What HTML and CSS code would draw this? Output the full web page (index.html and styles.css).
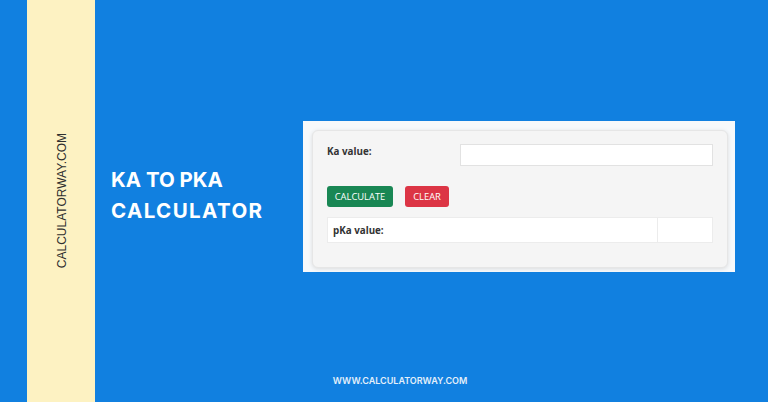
FILE: index.html
```html
<!DOCTYPE html>
<html lang="en">
<head>
<meta charset="utf-8">
<title>Ka to pKa Calculator</title>
<link rel="stylesheet" href="styles.css">
</head>
<body>
<div class="page">
  <div class="edge"></div>
  <aside class="strip"><span class="strip-text">CALCULATORWAY.COM</span></aside>
  <main class="main">
    <section class="content">
      <h1 class="title"><span class="title-line">KA TO PKA</span><span class="title-line title-wide">CALCULATOR</span></h1>
      <div class="shot">
        <div class="card">
          <div class="field">
            <label class="field-label">Ka value:</label>
            <div class="input"></div>
          </div>
          <div class="actions">
            <span class="btn btn-green">CALCULATE</span>
            <span class="btn btn-red">CLEAR</span>
          </div>
          <div class="result">
            <div class="result-label">pKa value:</div>
            <div class="result-value"></div>
          </div>
        </div>
      </div>
    </section>
    <footer class="footer">WWW.CALCULATORWAY.COM</footer>
  </main>
</div>
</body>
</html>
```
FILE: styles.css
```css
html, body {
  margin: 0;
  padding: 0;
}

body {
  background: #1180e0;
  font-family: "Open Sans", "Noto Sans", sans-serif;
}

.page {
  display: flex;
  width: 768px;
  height: 402px;
  overflow: hidden;
}

.edge {
  width: 27px;
  flex: none;
}

.strip {
  width: 68px;
  flex: none;
  background: #fdf2c2;
  display: flex;
  align-items: center;
  justify-content: center;
}

.strip-text {
  writing-mode: vertical-rl;
  transform: rotate(180deg);
  font-family: "Liberation Sans", Arial, sans-serif;
  font-size: 12px;
  color: #2f2f2f;
  margin-left: 2px;
}

.main {
  flex: 1;
  display: flex;
  flex-direction: column;
}

.content {
  display: flex;
  align-items: center;
  padding-top: 121px;
  padding-left: 16px;
}

.title {
  width: 192px;
  flex: none;
  margin: 0 0 4px 0;
  color: #ffffff;
  font-family: "Inter", sans-serif;
  font-weight: 700;
  font-size: 20.5px;
  line-height: 31px;
  display: flex;
  flex-direction: column;
}

.title-wide {
  letter-spacing: 1.4px;
}

.shot {
  width: 432px;
  height: 151px;
  box-sizing: border-box;
  background: #f7f9fb;
  padding: 9px 7px 4px 9px;
  display: flex;
}

.card {
  flex: 1;
  background: #f5f5f5;
  border: 1px solid #e6e6e6;
  border-radius: 6px;
  box-shadow: 0 1px 4px rgba(0, 0, 0, 0.12);
  padding: 13px 14px 0 14px;
  display: flex;
  flex-direction: column;
}

.field {
  display: flex;
  justify-content: space-between;
}

.field-label {
  font-weight: 700;
  font-size: 9.8px;
  color: #333;
  padding-top: 1px;
}

.input {
  width: 253px;
  height: 22px;
  box-sizing: border-box;
  background: #fff;
  border: 1px solid #e2e2e2;
}

.actions {
  display: flex;
  gap: 12px;
  margin-top: 20px;
}

.btn {
  height: 21px;
  box-sizing: border-box;
  border-radius: 3px;
  font-size: 9.4px;
  color: #fff;
  display: flex;
  align-items: center;
  justify-content: center;
}

.btn-green {
  background: #198754;
  width: 66px;
}

.btn-red {
  background: #dc3545;
  width: 44px;
}

.result {
  display: flex;
  margin-top: 10px;
  height: 26px;
  background: #fff;
  border: 1px solid #ececec;
  box-sizing: border-box;
}

.result-label {
  width: 330px;
  box-sizing: border-box;
  border-right: 1px solid #ececec;
  font-weight: 700;
  font-size: 9.8px;
  color: #333;
  padding-left: 5px;
  display: flex;
  align-items: center;
}

.result-value {
  flex: 1;
}

.footer {
  margin-top: auto;
  margin-right: 63px;
  padding-bottom: 16px;
  text-align: center;
  color: #e3effa;
  font-family: "Inter", sans-serif;
  font-weight: 600;
  font-size: 9px;
}
```
